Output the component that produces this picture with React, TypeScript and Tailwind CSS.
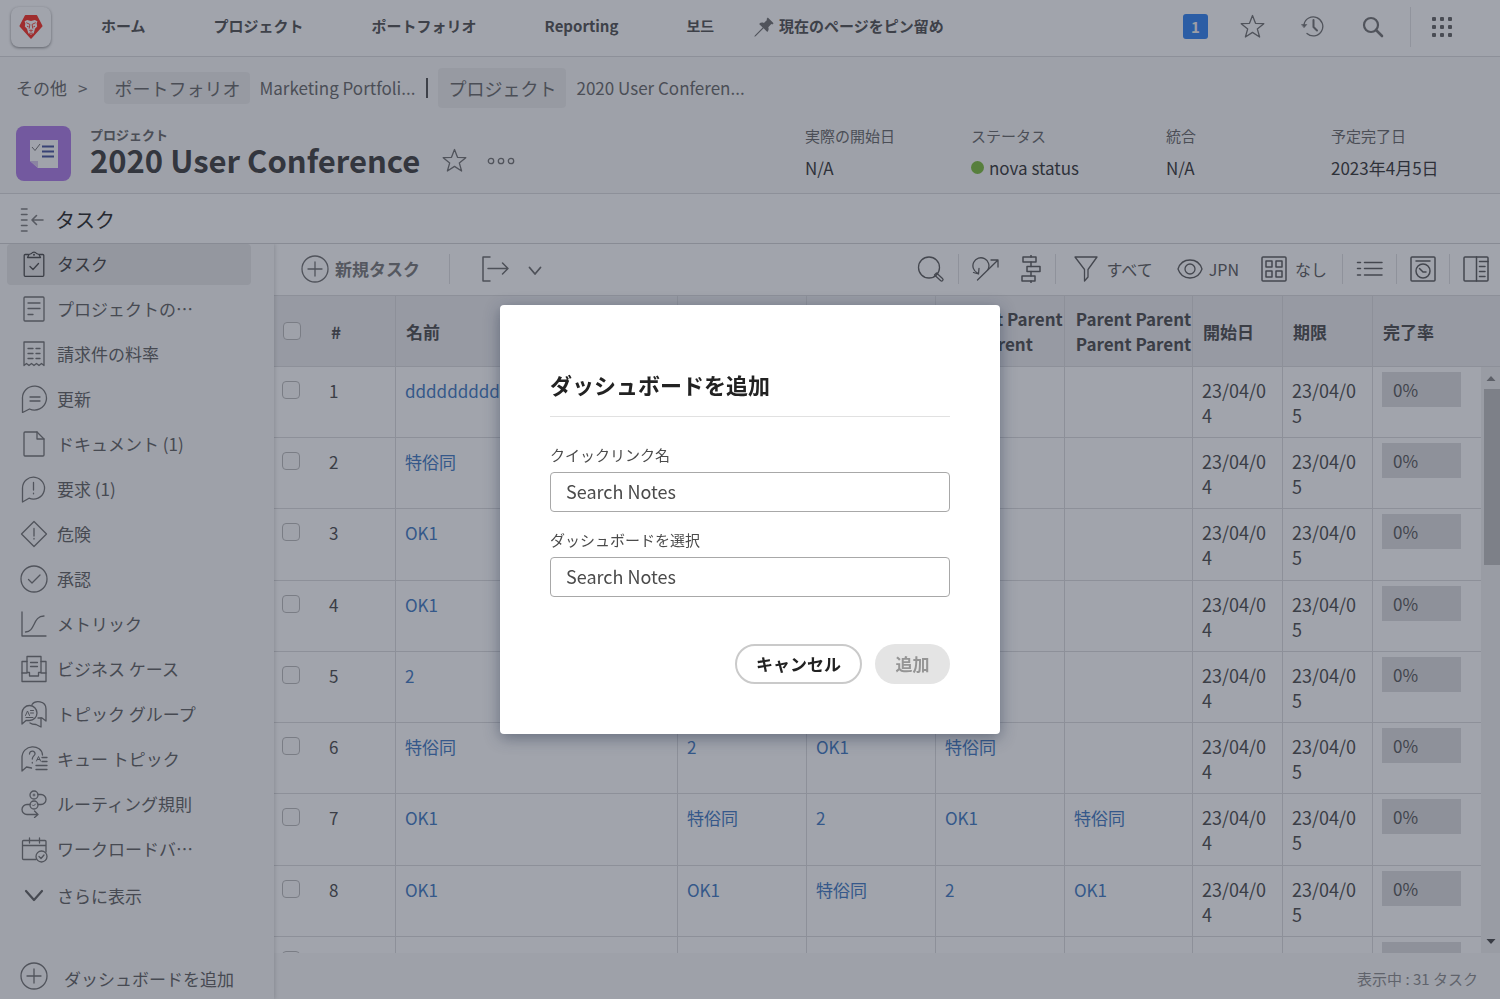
import React from "react";

type DrawingProps = {
  w: number;
  h: number;
  className?: string;
  strokeWidth?: number;
  children: React.ReactNode;
};

function Drawing({ w, h, className = "", strokeWidth = 1.3, children }: DrawingProps) {
  return (
    <svg
      width={w}
      height={h}
      viewBox={`0 0 ${w} ${h}`}
      fill="none"
      stroke="currentColor"
      strokeWidth={strokeWidth}
      strokeLinecap="round"
      strokeLinejoin="round"
      className={`shrink-0 ${className}`}
      aria-hidden="true"
    >
      {children}
    </svg>
  );
}

const STAR = "M12.5 1.5l3 7.8 8.3.4-6.5 5.2 2.3 8.1-7.1-4.6-7.1 4.6 2.3-8.1L1.2 9.7l8.3-.4z";

function LionLogo() {
  return (
    <svg width="24" height="24" viewBox="0 0 24 24" aria-hidden="true">
      <path d="M6.5.8h11L22.800 11 12 23 1.200 11z" fill="#fb3327" stroke="#fb3327" strokeWidth="1.500" strokeLinejoin="round" />
      <path
        d="M5.6 6.2l2.6-1.3 3.8 1 3.8-1 2.6 1.3-.7 2.3.5 3-2.2 2.2-1.3 4.6L12 19.700l-2.7-1.4L8 13.7l-2.2-2.2.5-3z"
        fill="#fff"
      />
      <path
        d="M7.3 7.7l3.6 1.7-.7 4.2M16.7 7.7l-3.6 1.7.7 4.2M8 11.2l1.6.6M16 11.2l-1.6.6M10.6 15.2h2.8L12 16.6zM10.2 18.2h3.6"
        fill="none"
        stroke="#fb3327"
        strokeWidth="0.9"
      />
    </svg>
  );
}

function PlusCircle() {
  return (
    <Drawing w={28} h={28} className="text-[#757575]">
      <circle cx="14" cy="14" r="13" />
      <path d="M14 7v14M7 14h14" />
    </Drawing>
  );
}

const sideIcons: Record<string, React.ReactNode> = {
  task: (
    <>
      <path d="M8.500 4.500H5.200a1 1 0 0 0-1 1v19.800a1 1 0 0 0 1 1h17.600a1 1 0 0 0 1-1V5.500a1 1 0 0 0-1-1h-3.300" />
      <path d="M7.500 7.500l1.500-3 2.500-1a3 3 0 0 1 5 0l2.500 1 1.500 3z" />
      <circle cx="14" cy="4.800" r=".4" />
      <path d="M10 16.500l3 3 5.500-6" />
    </>
  ),
  details: (
    <>
      <rect x="4" y="2" width="20" height="24" rx="1" />
      <path d="M8 8h12M8 13.500h12M8 19.500h5" />
    </>
  ),
  billing: (
    <>
      <path d="M4 25.500V2h20v23.500l-2.500-2-2.500 2-2.500-2-2.500 2-2.500-2-2.500 2-2.500-2z" />
      <path d="M8 8.500h5M16 8.500h4M8 13.500h5M16 13.500h4M8 18.500h5M16 18.500h4" />
    </>
  ),
  updates: (
    <>
      <path d="M2.500 27.500V14A12 12 0 1 1 9.500 24z" />
      <path d="M10 12h10M10 16h10" />
    </>
  ),
  document: (
    <>
      <path d="M4 3a1 1 0 0 1 1-1h12l7 7v16a1 1 0 0 1-1 1H5a1 1 0 0 1-1-1z" />
      <path d="M17 2v7h7" />
    </>
  ),
  issues: (
    <>
      <path d="M2.500 27V13A11 11 0 1 1 9 23.200z" />
      <path d="M13.500 7.500V15M13.500 18.200v.6" />
    </>
  ),
  risk: (
    <>
      <path d="M14 1.500L26.500 14 14 26.500 1.500 14z" />
      <path d="M14 8.500v7.500M14 18.500v.6" />
    </>
  ),
  approval: (
    <>
      <circle cx="14" cy="14" r="13" />
      <path d="M8.500 14.500l3.500 3.500 8-8" />
    </>
  ),
  metrics: (
    <>
      <path d="M2 2v24h24" />
      <path d="M5.500 22c10 0 7-16 18.500-16" />
    </>
  ),
  business: (
    <>
      <path d="M7 6.500H2v20h24v-20h-5" />
      <path d="M2 18h5v-16.500h14V18h5M7 17.500h2.500V21h9v-3.500H21" />
      <path d="M10.500 7.500h7M10.500 11.500h7" />
    </>
  ),
  topicGroup: (
    <>
      <path d="M2 24V13a7.500 7.500 0 1 1 7.500 7.500H6z" />
      <path d="M12 4.500c3-4.500 14-4 14 4.500v12l-4-3h-4" />
      <path d="M10 23c2 1.500 4 1.500 6 1.500l5 2.500v-9" />
      <path d="M5.500 15.500l2-4.500 2 4.500M10.500 10.500h3M10.500 13h3M6 17.500h7" strokeWidth="1" />
    </>
  ),
  queueTopic: (
    <>
      <path d="M2 26V13C2 -1.500 22-1 22.500 10M2 26l4.500-4 5 1" />
      <path d="M9.500 9c0-4 6-3.500 5.500 0-.3 2-2.700 2-2.700 5M12.300 17.500v.5" />
      <path d="M16.500 16l2-4.500 2 4.500M17.300 14.500h2.500" strokeWidth="1" />
      <path d="M22 12.500h5M22 16.500h5M16 20.500h11M16 24.500h11" />
    </>
  ),
  routing: (
    <>
      <circle cx="14" cy="5" r="4" />
      <circle cx="14" cy="15" r="4" />
      <path d="M18 4.500h3a5 5 0 0 1 0 10h-3M10 14.500H7a5 5 0 0 0 0 10h10.500M14.500 21l3.500 3.500-3.500 3" />
      <path d="M13 5h2M14 4v2M12.500 15l1 1 2-2" strokeWidth="1" />
    </>
  ),
  workload: (
    <>
      <path d="M16 24.500H3.500a1 1 0 0 1-1-1V6.500a1 1 0 0 1 1-1h21.500a1 1 0 0 1 1 1V17M2.500 10.500H26M9.500 3v5M19.500 3v5" />
      <circle cx="21.500" cy="21.500" r="5.500" />
      <path d="M19 21.500l2 2 3-3.500" />
    </>
  ),
};

const sideItems: { id: string; label: string }[] = [
  { id: "task", label: "タスク" },
  { id: "details", label: "プロジェクトの…" },
  { id: "billing", label: "請求件の料率" },
  { id: "updates", label: "更新" },
  { id: "document", label: "ドキュメント (1)" },
  { id: "issues", label: "要求 (1)" },
  { id: "risk", label: "危険" },
  { id: "approval", label: "承認" },
  { id: "metrics", label: "メトリック" },
  { id: "business", label: "ビジネス ケース" },
  { id: "topicGroup", label: "トピック グループ" },
  { id: "queueTopic", label: "キュー トピック" },
  { id: "routing", label: "ルーティング規則" },
  { id: "workload", label: "ワークロードバ…" },
];

const rows: string[][] = [
  ["dddddddddddd", "", "", "", ""],
  ["特俗同", "", "", "", ""],
  ["OK1", "", "", "", ""],
  ["OK1", "", "", "", ""],
  ["2", "", "", "", ""],
  ["特俗同", "2", "OK1", "特俗同", ""],
  ["OK1", "特俗同", "2", "OK1", "特俗同"],
  ["OK1", "OK1", "特俗同", "2", "OK1"],
];

function TopBar() {
  return (
    <header className="flex h-[57px] shrink-0 items-center border-b border-[#dcdcde] bg-white pr-12 pb-[3px] pl-[11px] text-[15px] font-bold text-[#555]">
      <a
        href="#home"
        aria-label="Workfront"
        className="flex h-10 w-10 items-center justify-center rounded-lg bg-white shadow-[0_1px_3px_rgba(0,0,0,0.45)]"
      >
        <LionLogo />
      </a>
      <nav className="ml-[50px] flex items-center gap-[68px] whitespace-nowrap">
        <a href="#home">ホーム</a>
        <a href="#projects">プロジェクト</a>
        <a href="#portfolios">ポートフォリオ</a>
        <a href="#reporting">Reporting</a>
        <a href="#boards">보드</a>
      </nav>
      <button type="button" className="ml-10 flex items-center gap-[5px] whitespace-nowrap">
        <svg width="20" height="20" viewBox="0 0 20 20" className="text-[#747474]" aria-hidden="true">
          <path
            fill="currentColor"
            d="M13.800.4l5.800 5.800-1.300 1.300-1-.4-3 3.100c.6 1.800.4 3.400-1 4.800l-3.700-3.700-8 8-1.200.4.400-1.300 7.900-7.900-3.600-3.600c1.400-1.400 3-1.600 4.800-1l3.100-3-.4-1z"
          />
        </svg>
        現在のページをピン留め
      </button>
      <div className="ml-auto flex items-center text-[#757575]">
        <button
          type="button"
          aria-label="通知"
          className="mr-8 h-[25px] w-[25px] rounded-[3px] bg-[#3486f3] text-center text-[15px] leading-[25px] text-[#f4f4f4]"
        >
          1
        </button>
        <button type="button" aria-label="お気に入り" className="mr-9">
          <Drawing w={25} h={25}>
            <path d={STAR} />
          </Drawing>
        </button>
        <button type="button" aria-label="履歴" className="mr-[38px]">
          <Drawing w={23} h={23}>
            <path d="M3 9.500A9.500 9.500 0 1 1 6 18.500" />
            <path d="M.800 9.500h5L3.200 12.500z" fill="currentColor" strokeWidth="0.600" />
            <path d="M12.500 5v7l3.500 3.500" strokeWidth="2" />
          </Drawing>
        </button>
        <button type="button" aria-label="検索">
          <Drawing w={22} h={22} strokeWidth={2.2}>
            <circle cx="9" cy="9" r="7" />
            <path d="M14 14l6 6" strokeWidth="2.600" />
          </Drawing>
        </button>
        <span className="mr-[21px] ml-[26px] h-10 w-px bg-[#e4e4e6]" />
        <button type="button" aria-label="メニュー" className="grid grid-cols-3 gap-1">
          {Array.from({ length: 9 }, (_, i) => (
            <span key={i} className="h-1 w-1 rounded-[1px] bg-[#686868]" />
          ))}
        </button>
      </div>
    </header>
  );
}

function ProjectHeader() {
  return (
    <section className="flex h-[137px] shrink-0 flex-col border-b border-[#dcdcde] bg-[#fafafa] text-[#4b4b4b]">
      <div className="mt-[11px] flex h-10 items-center pl-4 text-[17px] whitespace-nowrap text-[#6c6c6c]">
        <a href="#other">その他</a>
        <span className="ml-[11px] text-[#777]">&gt;</span>
        <a href="#portfolio" className="ml-[17px] flex h-8 w-[146px] items-center justify-center rounded bg-[#eeeeee] text-lg">
          ポートフォリオ
        </a>
        <a href="#marketing" className="ml-[9px]">Marketing Portfoli...</a>
        <span className="ml-[11px] h-5 w-[2px] bg-[#555]" />
        <a href="#project" className="ml-[10px] flex h-10 w-[128px] items-center justify-center rounded bg-[#eeeeee] text-lg">
          プロジェクト
        </a>
        <a href="#conference" className="ml-[10px]">2020 User Conferen...</a>
      </div>
      <div className="mt-[18px] flex items-center pl-4">
        <div className="flex h-[55px] w-[55px] shrink-0 items-center justify-center rounded-lg bg-[#b07ee8]">
          <svg width="30" height="30" viewBox="0 0 30 30" aria-hidden="true">
            <path d="M1 1h28v28H9l-8-7z" fill="#fdfdfd" />
            <path d="M1 22h8v7z" fill="#d9c8ee" />
            <path d="M13 7.500h12M13 12.500h12M13 17.500h12" stroke="#4a56a0" strokeWidth="2.200" />
            <path d="M3 8l3 3.500L11 5" fill="none" stroke="#777" />
          </svg>
        </div>
        <div className="-mt-1 ml-[19px] whitespace-nowrap">
          <p className="text-[13px] leading-4 font-bold text-[#6c6c6c]">プロジェクト</p>
          <h1 className="text-[31px] leading-[34px] font-bold text-[#424242]">2020 User Conference</h1>
        </div>
        <button type="button" aria-label="お気に入りに追加" className="mt-[14px] ml-[22px] text-[#757575]">
          <Drawing w={25} h={25}>
            <path d={STAR} />
          </Drawing>
        </button>
        <button type="button" aria-label="その他の操作" className="mt-[14px] ml-5 text-[#757575]">
          <Drawing w={28} h={8}>
            <circle cx="4" cy="4" r="2.700" />
            <circle cx="14" cy="4" r="2.700" />
            <circle cx="24" cy="4" r="2.700" />
          </Drawing>
        </button>
        <dl className="-mt-1 ml-auto grid grid-cols-[166px_195px_165px_169px] whitespace-nowrap text-[#3a3a3a]">
          <div>
            <dt className="text-[15px] leading-6 text-[#6c6c6c]">実際の開始日</dt>
            <dd className="mt-2 text-[17px] leading-6">N/A</dd>
          </div>
          <div>
            <dt className="text-[15px] leading-6 text-[#6c6c6c]">ステータス</dt>
            <dd className="mt-2 flex items-center gap-[5px] text-[17px] leading-6">
              <span className="h-[13px] w-[13px] rounded-full bg-[#80c040]" />
              nova status
            </dd>
          </div>
          <div>
            <dt className="text-[15px] leading-6 text-[#6c6c6c]">統合</dt>
            <dd className="mt-2 text-[17px] leading-6">N/A</dd>
          </div>
          <div>
            <dt className="text-[15px] leading-6 text-[#6c6c6c]">予定完了日</dt>
            <dd className="mt-2 text-[17px] leading-6">2023年4月5日</dd>
          </div>
        </dl>
      </div>
    </section>
  );
}

function Sidebar() {
  return (
    <aside className="relative z-10 flex w-[274px] shrink-0 flex-col bg-[#fafafa] text-[17px] whitespace-nowrap text-[#646464] shadow-[1px_0_4px_rgba(0,0,0,0.15)]">
      <nav className="flex flex-col gap-1 pr-[23px] pl-[7px]">
        {sideItems.map((item, i) => (
          <a
            key={item.id}
            href={`#${item.id}`}
            className={
              i === 0
                ? "flex h-[41px] items-center gap-[9px] rounded bg-[#e8e8e8] pb-[2px] pl-[13px] text-[#484848]"
                : "flex h-[41px] items-center gap-[9px] rounded pb-[2px] pl-[13px]"
            }
          >
            <Drawing w={28} h={28} className={i === 0 ? "text-[#505050]" : "text-[#757575]"}>
              {sideIcons[item.id]}
            </Drawing>
            {item.label}
          </a>
        ))}
        <button type="button" className="mt-[2px] flex h-[41px] items-center gap-[9px] pb-[2px] pl-[13px]">
          <Drawing w={28} h={28} strokeWidth={2.2}>
            <path d="M6 9l8 9 8-9" />
          </Drawing>
          さらに表示
        </button>
      </nav>
      <button type="button" className="mt-auto mb-2 flex items-center gap-4 pl-5">
        <PlusCircle />
        <span className="pt-1">ダッシュボードを追加</span>
      </button>
    </aside>
  );
}

function Separator() {
  return <span className="h-[30px] w-px bg-[#e0e0e2]" />;
}

function Toolbar() {
  return (
    <div className="flex h-[52px] shrink-0 items-center border-b border-[#dcdcde] bg-white pr-[11px] pb-[2px] pl-[27px] whitespace-nowrap text-[#606060]">
      <button type="button" className="mr-[29px] flex items-center gap-[6px] text-[17px] font-bold text-[#7c7c7c]">
        <PlusCircle />
        新規タスク
      </button>
      <Separator />
      <button type="button" aria-label="エクスポート" className="ml-8 flex items-center gap-[18px] text-[#707070]">
        <Drawing w={28} h={28} strokeWidth={1.5}>
          <path d="M8 2H1v24h7M6 13.500h20M20.500 8l5.500 5.500-5.500 5.500" />
        </Drawing>
        <Drawing w={14} h={10} className="mt-1" strokeWidth={1.8}>
          <path d="M1.500 1.500L7 8l5.500-6.500" />
        </Drawing>
      </button>
      <div className="ml-auto flex items-center gap-[13px] text-base">
        <button type="button" aria-label="検索">
          <Drawing w={28} h={28}>
            <circle cx="12" cy="12.500" r="10.500" />
            <path d="M17.500 20l2-2 6 5.500c1.500 1.500-.5 3.500-2 2z" />
          </Drawing>
        </button>
        <Separator />
        <button type="button" aria-label="タイムライン">
          <Drawing w={28} h={28}>
            <path d="M5.500 18a8 8 0 1 1 10.500-3.500M1.500 17.500l5 1.500.5-5.500" />
            <path d="M5.500 25L26 5M19 5h7v7" />
          </Drawing>
        </button>
        <button type="button" aria-label="ガントチャート" className="ml-[7px]">
          <Drawing w={22} h={28} strokeWidth={1.5}>
            <rect x="3" y="2" width="13" height="5" />
            <rect x="7" y="11.500" width="13" height="5" />
            <rect x="2" y="21" width="13" height="5" />
            <path d="M11 0v2M11 7v4.500M11 16.500V21M11 26v2" />
          </Drawing>
        </button>
        <Separator />
        <button type="button" className="mr-[10px] ml-[5px] flex items-center gap-2">
          <Drawing w={24} h={26}>
            <path d="M1 1h22l-9 12.500V21l-3.500 4V13.500z" />
          </Drawing>
          すべて
        </button>
        <button type="button" className="mr-[9px] flex items-center gap-[5px]">
          <Drawing w={28} h={22}>
            <path d="M2 11c4-12 20-12 24 0-4 12-20 12-24 0z" />
            <circle cx="14" cy="11" r="5" />
          </Drawing>
          JPN
        </button>
        <button type="button" className="mr-[2px] flex items-center gap-2">
          <Drawing w={26} h={26} strokeWidth={1.5}>
            <rect x="1" y="1" width="24" height="24" rx="1" />
            <rect x="5" y="5" width="6" height="6" />
            <rect x="15" y="5" width="6" height="6" />
            <rect x="5" y="15" width="6" height="6" />
            <rect x="15" y="15" width="6" height="6" />
          </Drawing>
          なし
        </button>
        <Separator />
        <button type="button" aria-label="リスト">
          <Drawing w={27} h={20} strokeWidth={1.5}>
            <path d="M1.500 3.500h3M8.500 3.500H26M1.500 9.500h3M8.500 9.500H26M1.500 16h3M8.500 16H26" />
          </Drawing>
        </button>
        <Separator />
        <button type="button" aria-label="履歴表示">
          <Drawing w={26} h={26} strokeWidth={1.5}>
            <rect x="1" y="1" width="24" height="24" rx="1" />
            <circle cx="13" cy="15" r="7" />
            <path d="M6 5h14M9.500 12.500l3.500 3.500h3" />
          </Drawing>
        </button>
        <Separator />
        <button type="button" aria-label="概要">
          <Drawing w={26} h={26} strokeWidth={1.5}>
            <rect x="1" y="1" width="24" height="24" rx="1" />
            <path d="M13.500 1v24M16.500 5.500H25M16.500 10.500H22M16.500 15.500H22M16.500 20.500H22" />
          </Drawing>
        </button>
      </div>
    </div>
  );
}

function TickBox({ label }: { label: string }) {
  return (
    <input
      type="checkbox"
      aria-label={label}
      className="block h-[18px] w-[18px] appearance-none rounded border border-[#bcbcbc] bg-[#fcfcfc]"
    />
  );
}

const headCell = "border-r border-b border-[#dcdcde] p-0 pl-[10px]";
const bodyCell = "border-r border-b border-[#dcdcde] p-0 pt-[11px] pl-[9px] align-top";

function TaskTable() {
  return (
    <div className="flex min-h-0 flex-1">
      <div className="min-w-0 flex-1 overflow-hidden">
        <table className="h-[712px] w-full table-fixed border-separate border-spacing-0 text-left text-[17px] leading-[25px] text-[#505050]">
          <colgroup>
            <col className="w-[41px]" />
            <col className="w-[81px]" />
            <col />
            <col className="w-[129px]" />
            <col className="w-[129px]" />
            <col className="w-[129px]" />
            <col className="w-[128px]" />
            <col className="w-[90px]" />
            <col className="w-[90px]" />
            <col className="w-[108px]" />
          </colgroup>
          <thead className="bg-[#eeeef0] leading-[25px]">
            <tr className="h-[71px]">
              <th className="border-b border-[#dcdcde] p-0 pl-[9px]">
                <TickBox label="すべて選択" />
              </th>
              <th className="border-r border-b border-[#dcdcde] p-0 pl-4">#</th>
              <th className={headCell}>名前</th>
              <th className={headCell}>Parent</th>
              <th className={headCell}>Parent Parent</th>
              <th className="border-r border-b border-[#dcdcde] p-0 pl-[10px] text-center">Parent Parent Parent</th>
              <th className="border-r border-b border-[#dcdcde] p-0 pl-[10px] text-center">Parent Parent Parent Parent</th>
              <th className={headCell}>開始日</th>
              <th className={headCell}>期限</th>
              <th className="border-b border-[#dcdcde] p-0 pl-[10px]">完了率</th>
            </tr>
          </thead>
          <tbody>
            {rows.map((names, i) => (
              <tr key={i} className="h-[71px] bg-white">
                <td className="border-b border-[#dcdcde] p-0 pt-[14px] pl-2 align-top">
                  <TickBox label={`タスク ${i + 1}`} />
                </td>
                <td className="border-r border-b border-[#dcdcde] p-0 pt-[11px] pl-[14px] align-top">{i + 1}</td>
                {names.map((name, j) => (
                  <td key={j} className={bodyCell}>
                    {name && (
                      <a href="#task" className="text-[#457dc4]">
                        {name}
                      </a>
                    )}
                  </td>
                ))}
                <td className={`${bodyCell} pr-3 text-lg leading-[25px] break-all`}>23/04/04</td>
                <td className={`${bodyCell} pr-3 text-lg leading-[25px] break-all`}>23/04/05</td>
                <td className="border-b border-[#dcdcde] p-0 pt-[5px] pl-[9px] align-top">
                  <div className="flex h-[35px] w-[79px] items-center bg-[#dedee0] pl-[11px] text-[#5c5c5c]">0%</div>
                </td>
              </tr>
            ))}
            <tr className="h-[71px] bg-white">
              <td className="p-0 pt-[14px] pl-2 align-top">
                <TickBox label="タスク 9" />
              </td>
              <td className="border-r border-[#dcdcde] p-0" />
              {["a", "b", "c", "d", "e", "f", "g"].map((key) => (
                <td key={key} className="border-r border-[#dcdcde] p-0" />
              ))}
              <td className="p-0 pt-[5px] pl-[9px] align-top">
                <div className="h-[35px] w-[79px] bg-[#dedee0]" />
              </td>
            </tr>
          </tbody>
        </table>
      </div>
      <div className="flex w-[19px] shrink-0 flex-col bg-[#f1f1f1]">
        <div className="h-[71px] shrink-0 border-b border-[#dcdcde] bg-[#eeeef0]" />
        <div className="flex flex-1 flex-col items-end">
          <svg width="17" height="22" viewBox="0 0 17 22" aria-hidden="true">
            <path d="M3.500 14h9L8 9z" fill="#8a8a8a" />
          </svg>
          <div className="h-[176px] w-4 bg-[#c1c1c1]" />
          <svg width="17" height="22" viewBox="0 0 17 22" className="mt-auto" aria-hidden="true">
            <path d="M3.500 8h9L8 13z" fill="#4c4c4c" />
          </svg>
        </div>
      </div>
    </div>
  );
}

function AddDashboardDialog() {
  return (
    <div className="fixed inset-0 z-20 flex items-center justify-center bg-[#1f2639]/42 pt-10">
      <div
        role="dialog"
        aria-modal="true"
        aria-labelledby="dialog-title"
        className="w-[500px] rounded bg-white px-[50px] pt-[63px] pb-[50px] shadow-[0_4px_16px_rgba(30,45,70,0.45)]"
      >
        <h2 id="dialog-title" className="border-b border-[#e1e1e1] pb-4 text-[22px] leading-8 font-bold text-[#222]">
          ダッシュボードを追加
        </h2>
        <form>
          <label htmlFor="link-name" className="mt-[26px] mb-[5px] block text-[15px] leading-6 text-[#4b4b4b]">
            クイックリンク名
          </label>
          <input
            id="link-name"
            type="text"
            placeholder="Search Notes"
            className="block h-10 w-full rounded border border-[#a8a8a8] bg-white px-[15px] pb-[2px] text-lg text-[#444] placeholder:text-[#4b4b4b]"
          />
          <label htmlFor="dashboard" className="mt-4 mb-[5px] block text-[15px] leading-6 text-[#4b4b4b]">
            ダッシュボードを選択
          </label>
          <input
            id="dashboard"
            type="text"
            placeholder="Search Notes"
            className="block h-10 w-full rounded border border-[#a8a8a8] bg-white px-[15px] pb-[2px] text-lg text-[#444] placeholder:text-[#4b4b4b]"
          />
          <div className="mt-[47px] flex justify-end gap-[13px] text-[17px] font-bold">
            <button type="button" className="h-10 w-[127px] rounded-full border-2 border-[#cacaca] text-[#222]">
              キャンセル
            </button>
            <button type="submit" disabled className="h-10 w-[75px] rounded-full bg-[#e4e4e4] text-[#959595]">
              追加
            </button>
          </div>
        </form>
      </div>
    </div>
  );
}

export default function App() {
  return (
    <div
      lang="ja"
      className="flex h-screen flex-col overflow-hidden bg-white font-['Noto_Sans_CJK_JP','Noto_Sans_CJK_KR',sans-serif]"
    >
      <TopBar />
      <ProjectHeader />
      <div className="flex h-[50px] shrink-0 items-center gap-[11px] border-b border-[#d4d4d6] bg-white pt-[2px] pl-[19px] text-xl text-[#2c2c2c]">
        <button type="button" aria-label="パネルを折りたたむ" className="text-[#808080]">
          <Drawing w={25} h={26} strokeWidth={1.6}>
            <path d="M2.500 2h5.500M2.500 7.500h5.500M2.500 13h5.500M2.500 18.500h5.500M2.500 24h5.500M13 13h11M17.500 8.500L13 13l4.500 4.500" />
          </Drawing>
        </button>
        <h2>タスク</h2>
      </div>
      <div className="flex min-h-0 flex-1 overflow-hidden">
        <Sidebar />
        <main className="flex min-w-0 flex-1 flex-col">
          <Toolbar />
          <TaskTable />
          <footer className="flex h-[46px] shrink-0 items-center justify-end bg-[#fafafa] pt-[6px] pr-[22px] text-[15px] text-[#909090]">
            表示中 : 31 タスク
          </footer>
        </main>
      </div>
      <AddDashboardDialog />
    </div>
  );
}
